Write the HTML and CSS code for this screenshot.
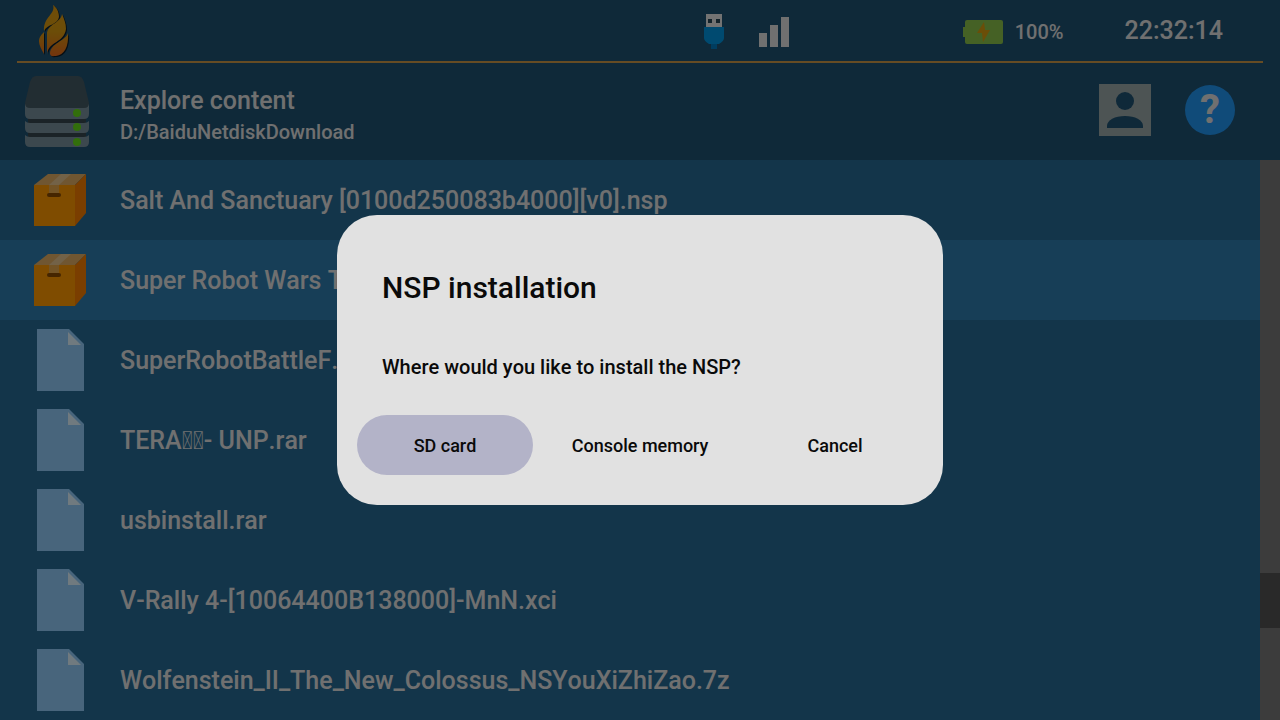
FILE: index.html
```
<!DOCTYPE html>
<html lang="en">
<head>
<meta charset="utf-8">
<meta name="viewport" content="width=device-width, initial-scale=1">
<title>Explore content</title>
<link rel="stylesheet" href="styles.css">
</head>
<body>
<svg class="sprite" aria-hidden="true">
  <symbol id="box" viewBox="0 0 52 52">
    <path fill="#ff9800" d="M0 11h41v41H0z"/>
    <path fill="#e0ac62" d="M0 11 14 0h38L41 11z"/>
    <path fill="#f57c00" d="M41 11 52 0v39L41 52z"/>
    <path fill="#e6c48f" d="M15 11 27 0h10L25 11z"/>
    <path fill="#e6a84c" d="M15 11h10v8H15z"/>
    <rect x="13" y="19" width="14" height="4" rx="2" fill="#8a4b00"/>
  </symbol>
  <symbol id="file" viewBox="0 0 47 62">
    <path fill="#90caf9" d="M0 0h32l15 15v47H0z"/>
    <path fill="#e1f5fe" d="M31 3v13h13z"/>
  </symbol>
</svg>

<div class="app">
  <header class="header">
    <div class="status">
      <svg class="logo" width="32" height="54" viewBox="0 0 32 54" role="img" aria-label="Logo">
        <defs>
          <linearGradient id="flame" x1="0" y1="0" x2="0" y2="54" gradientUnits="userSpaceOnUse">
            <stop offset="0" stop-color="#e09a10"/><stop offset=".5" stop-color="#d89a10"/><stop offset="1" stop-color="#e8641c"/>
          </linearGradient>
        </defs>
        <g id="flames" fill="#0b1c28" transform="translate(1 1)">
          <path d="M15 0c3 9-10 12-9 26 3-7 14-6 15-14 0-6-3-10-6-12z"/>
          <path d="M24 9c-1 9-15 10-15 20v20c2-13 17-11 19-25 0-6-2-10-4-15z"/>
          <path d="M30 28c-2 8-18 10-18 21 1 3 3 2 6 2 8-1 13-9 12-23z"/>
          <path d="M6 27c-9 8-4 14 0 22z"/>
        </g>
        <g fill="url(#flame)">
          <path d="M15 0c3 9-10 12-9 26 3-7 14-6 15-14 0-6-3-10-6-12z"/>
          <path d="M24 9c-1 9-15 10-15 20v20c2-13 17-11 19-25 0-6-2-10-4-15z"/>
          <path d="M30 28c-2 8-18 10-18 21 1 3 3 2 6 2 8-1 13-9 12-23z"/>
          <path d="M6 27c-9 8-4 14 0 22z"/>
        </g>
      </svg>
      <svg class="usb" width="20" height="36" viewBox="0 0 20 36" role="img" aria-label="USB connected">
        <path fill="#e6e6e6" d="M2 0h16v14H2z"/>
        <path fill="#294657" d="M4 5h4v4H4zM12 5h4v4h-4z"/>
        <path fill="#007ac1" d="M7 28h6v7H7z"/>
        <path fill="#0095e0" d="M0 13h20v11q0 3-5 6H5q-5-3-5-6z"/>
      </svg>
      <svg class="signal" width="30" height="30" viewBox="0 0 30 30" role="img" aria-label="Signal">
        <path fill="#e1e1e1" d="M0 16h8v14H0zM11 8h8v22h-8zM22 0h8v30h-8z"/>
      </svg>
      <div class="battery">
        <svg width="40" height="24" viewBox="0 0 40 24" role="img" aria-label="Charging">
          <path fill="#8bc34a" d="M4 0h34q2 0 2 2v20q0 2-2 2H4q-2 0-2-2v-5H0V7h2V2q0-2 2-2z"/>
          <path fill="#d69c10" d="m21 2-7 11h5l1 9 7-12h-5z"/>
        </svg>
        <span>100%</span>
      </div>
      <time class="clock">22:32:14</time>
    </div>
    <div class="location">
      <svg class="drive" width="64" height="72" viewBox="0 0 64 72" aria-hidden="true">
        <path fill="#37474f" d="M3 28h58v38H3z"/>
        <path fill="#78909c" d="M0 28h64v10q0 5-5 5H5q-5 0-5-5zM0 45q2 2 5 2h54q3 0 5-2v7q0 5-5 5H5q-5 0-5-5zM0 59q2 2 5 2h54q3 0 5-2v7q0 5-5 5H5q-5 0-5-5z"/>
        <path fill="#455a64" d="M11 0h42q4 0 6 6l5 21q0 5-5 5H5q-5 0-5-5L5 6q2-6 6-6z"/>
        <g fill="#64dd17"><circle cx="52" cy="37" r="4"/><circle cx="52" cy="51" r="4"/><circle cx="52" cy="66" r="4"/></g>
      </svg>
      <div class="titles">
        <h1>Explore content</h1>
        <p>D:/BaiduNetdiskDownload</p>
      </div>
      <div class="tools">
        <button class="user" aria-label="User">
          <svg width="52" height="52" viewBox="0 0 52 52">
            <path fill="#9ba8a8" d="M0 0h52v52H0z"/>
            <g fill="#1e5272"><circle cx="26" cy="17" r="9"/><path d="M8 44v-2c0-6 8-10 18-10s18 4 18 10v2z"/></g>
          </svg>
        </button>
        <button class="help" aria-label="Help">?</button>
      </div>
    </div>
  </header>

  <main class="browser">
    <ul class="files">
      <li><svg class="box"><use href="#box"/></svg><span>Salt And Sanctuary [0100d250083b4000][v0].nsp</span></li>
      <li class="selected"><svg class="box"><use href="#box"/></svg><span>Super Robot Wars T</span></li>
      <li><svg class="file"><use href="#file"/></svg><span>SuperRobotBattleF.</span></li>
      <li><svg class="file"><use href="#file"/></svg><span>TERA&#xE000;&#xE000;- UNP.rar</span></li>
      <li><svg class="file"><use href="#file"/></svg><span>usbinstall.rar</span></li>
      <li><svg class="file"><use href="#file"/></svg><span>V-Rally 4-[10064400B138000]-MnN.xci</span></li>
      <li><svg class="file"><use href="#file"/></svg><span>Wolfenstein_II_The_New_Colossus_NSYouXiZhiZao.7z</span></li>
    </ul>
    <div class="scrollbar"><div class="thumb"></div></div>
  </main>
</div>

<div class="overlay">
  <section class="dialog" role="dialog" aria-modal="true" aria-labelledby="dialog-title">
    <h2 id="dialog-title">NSP installation</h2>
    <p>Where would you like to install the NSP?</p>
    <div class="actions">
      <button class="active">SD card</button>
      <button>Console memory</button>
      <button>Cancel</button>
    </div>
  </section>
</div>
</body>
</html>
```
FILE: styles.css
```
* { box-sizing: border-box; }
body {
  margin: 0;
  font-family: Roboto, "Liberation Sans", sans-serif;
  font-weight: 500;
  font-kerning: none;
  color: #e1e1e1;
  background: #266a94;
}
h1, h2, p, ul { margin: 0; padding: 0; font-weight: 500; }
button { border: 0; padding: 0; font: inherit; font-kerning: none; background: none; cursor: pointer; }
svg { display: block; flex: none; }
.sprite { position: absolute; width: 0; height: 0; }

.app { height: 100vh; display: flex; flex-direction: column; overflow: hidden; }
.header { flex: none; background: #1e5272; }

.status {
  display: flex;
  align-items: center;
  height: 63px;
  margin: 0 17px;
  padding: 2px 40px 0 21px;
  border-bottom: 2px solid #cc9848;
}
.usb { margin-left: auto; }
.signal { margin-left: 35px; }
.battery {
  display: flex;
  align-items: center;
  gap: 12px;
  margin-left: 174px;
  font-size: 20px;
}
.clock { margin-left: 61px; font-size: 25px; line-height: 28px; padding-bottom: 2px; }

.location {
  display: flex;
  align-items: center;
  height: 97px;
  padding: 0 45px 0 25px;
}
.titles { flex: 1; margin-left: 31px; padding-top: 6px; }
.titles h1 { font-size: 25px; line-height: 34px; }
.titles p { font-size: 20px; line-height: 28px; }
.tools { display: flex; align-items: center; gap: 34px; padding-bottom: 4px; }
.help {
  width: 50px;
  height: 50px;
  border-radius: 50%;
  background: #2196f3;
  color: #e1e1e1;
  font-size: 40px;
  font-weight: 700;
  line-height: 50px;
}

.browser { flex: 1; display: flex; min-height: 0; }
.files { flex: 1; min-width: 0; list-style: none; }
.files li {
  display: grid;
  grid-template-columns: 120px 1fr;
  align-items: center;
  height: 80px;
  font-size: 25px;
  white-space: nowrap;
}
.files svg { justify-self: center; }
.files .selected { background: #2e7cae; }
.box { width: 52px; height: 52px; }
.file { width: 47px; height: 62px; }
.scrollbar { flex: none; width: 20px; padding-top: 413px; background: #787878; }
.thumb { height: 55px; background: #525252; }

.overlay {
  position: fixed;
  inset: 0;
  display: grid;
  place-items: center;
  background: rgba(0, 0, 0, 0.5);
}
.dialog {
  width: 606px;
  max-width: 100%;
  padding: 51px 20px 30px;
  border-radius: 40px;
  background: #e1e1e1;
  color: #0a0a0a;
}
.dialog h2 { padding: 0 25px; font-size: 30px; line-height: 44px; }
.dialog p { padding: 0 25px; margin: 43px 0 34px; font-size: 20px; line-height: 28px; }
.actions { display: grid; grid-template-columns: repeat(3, 1fr); gap: 19px; }
.actions button { height: 60px; border-radius: 40px; color: #0a0a0a; font-size: 18px; }
.actions .active { background: #b3b3c8; }
```
